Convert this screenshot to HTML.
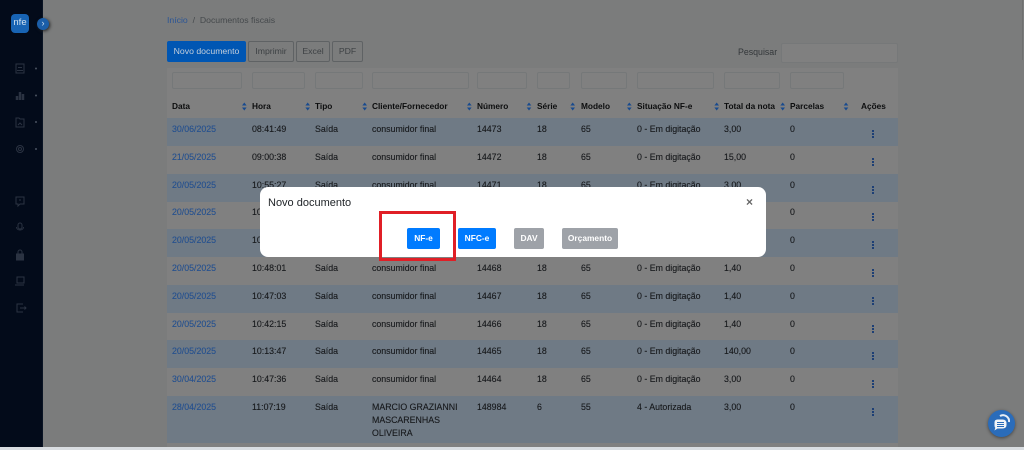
<!DOCTYPE html>
<html lang="pt-BR"><head><meta charset="utf-8"><title>Documentos fiscais</title>
<style>
*{box-sizing:border-box;margin:0;padding:0}
html,body{width:1024px;height:450px;overflow:hidden;background:#7b7c7c;font-family:"Liberation Sans",sans-serif;font-size:8.8px;color:#17191c}
.a,.r,.r span,.h span,.f,.b,.s,svg.i{position:absolute}
#side{position:absolute;left:0;top:0;width:43px;height:447px;background:#030b1a;border-right:1px solid #0a1424}
#bot{position:absolute;left:0;top:447px;width:1024px;height:3px;background:#d9dde1}
#card{position:absolute;left:167px;top:68px;width:731px;height:379px;background:#808080}
.f{top:72px;height:17px;border:1px solid #757879;border-radius:2px;background:#808080}
.h span{top:101px;font-weight:bold;font-size:8.3px;line-height:11px;color:#0c0d0e;white-space:nowrap}
.s{top:102px;width:5px;height:9px}
.r{left:167px;width:731px;height:28px}
.r.o{background:#6f7a85}
.r span{top:6px;line-height:11px;white-space:nowrap;-webkit-text-stroke:.12px currentColor}
.r .c1{left:5px;color:#24508f}
.c2{left:85px}.c3{left:148px}.c4{left:205px}.c5{left:310px}.c6{left:370px}.c7{left:414px}.c8{left:470px}.c9{left:557px}.c10{left:623px}
.r i{position:absolute;left:705px;top:12px;width:2px;height:8px;background:repeating-linear-gradient(#1d3f75 0 2px,transparent 2px 3px)}
.b{top:41px;height:21px;border:1px solid #5f6264;border-radius:2px;color:#3d4144;text-align:center;line-height:19px;font-size:8.7px}
.m{position:absolute;top:228px;height:21px;border-radius:2px;color:#fff;text-align:center;line-height:21px;font-size:8.4px;font-weight:bold;background:#007bff}
.g{background:#9ea2a8}
</style></head><body>
<div id="side"></div>
<div class="a" style="left:11px;top:14px;width:18px;height:19px;background:#1864b4;border-radius:4px;color:#cfe0f0;font-size:9.5px;line-height:18px;text-align:center">nfe</div>
<div class="a" style="left:37px;top:18px;width:12px;height:12px;border-radius:50%;background:#1b5ea8;box-shadow:1px 1px 3px #222;color:#cfe0f0;font-size:9px;line-height:11px;text-align:center">›</div>
<svg class="i" style="left:0;top:50px" width="43" height="280" fill="none" stroke="#2b3342" stroke-width="1">
<rect x="16" y="14" width="8" height="9"/><path d="M18 17.500h4M17 20.500h6"/>
<path d="M17 50v-4M20 50v-8M23 50v-6" stroke-width="2.500"/>
<path d="M16 68h3l1 1h4v8h-8zM18 75l2-2 2 2"/>
<circle cx="20" cy="99" r="3.500"/><circle cx="20" cy="99" r="1.500"/>
<path d="M16 147h8v7h-4l-2 2v-2h-2z"/><path d="M20 149v2"/>
<rect x="18" y="173" width="4" height="6" rx="2"/><path d="M16.500 177c0 4 7 4 7 0"/>
<rect x="16.500" y="204" width="7" height="6" fill="#2b3342"/><path d="M18 204v-2a2 2 0 0 1 4 0v2"/>
<path d="M17 227h7v6h-7zM15 235h9"/>
<path d="M23 254h-6v8h6M20 258h6M24.500 256.500l1.500 1.500-1.500 1.500"/>
</svg>
<svg class="i" style="left:34px;top:66px" width="4" height="90" fill="#4a5260"><circle cx="2" cy="2.500" r="1"/><circle cx="2" cy="29.500" r="1"/><circle cx="2" cy="56" r="1"/><circle cx="2" cy="83" r="1"/></svg>

<div class="a" style="left:167px;top:15px;font-size:8.7px;line-height:11px;color:#45494c;white-space:nowrap"><span style="color:#2b5596">Início</span> &nbsp;/&nbsp; Documentos fiscais</div>
<div class="b" style="left:167px;width:79px;background:#0056b3;border-color:#0056b3;color:#c4cfdb">Novo documento</div>
<div class="b" style="left:248px;width:46px">Imprimir</div>
<div class="b" style="left:296px;width:34px">Excel</div>
<div class="b" style="left:332px;width:31px">PDF</div>
<div class="a" style="left:738px;top:47px;line-height:11px;color:#33373a">Pesquisar</div>
<div class="a" style="left:781px;top:43px;width:117px;height:20px;background:#808080;border:1px solid #767879;border-radius:2px"></div>

<div id="card"></div>
<div class="f" style="left:172px;width:70px"></div><div class="f" style="left:252px;width:53px"></div><div class="f" style="left:315px;width:48px"></div><div class="f" style="left:372px;width:97px"></div><div class="f" style="left:477px;width:50px"></div><div class="f" style="left:537px;width:33px"></div><div class="f" style="left:581px;width:46px"></div><div class="f" style="left:637px;width:77px"></div><div class="f" style="left:724px;width:56px"></div><div class="f" style="left:790px;width:54px"></div>
<div class="h">
<span style="left:172px">Data</span><span style="left:252px">Hora</span><span style="left:315px">Tipo</span><span style="left:372px">Cliente/Fornecedor</span><span style="left:477px">Número</span><span style="left:537px">Série</span><span style="left:581px">Modelo</span><span style="left:637px">Situação NF-e</span><span style="left:724px">Total da nota</span><span style="left:790px">Parcelas</span><span style="left:861px">Ações</span>
</div>
<svg class="s" style="left:0;top:102px;width:1024px;height:9px" fill="#174a8e"><path d="M242 3.500l2.300-3 2.300 3zM242 5.500l2.300 3 2.300-3zM305.400 3.500l2.300-3 2.300 3zM305.400 5.500l2.300 3 2.300-3zM362.400 3.500l2.300-3 2.300 3zM362.400 5.500l2.300 3 2.300-3zM467 3.500l2.300-3 2.300 3zM467 5.500l2.300 3 2.300-3zM526.700 3.500l2.300-3 2.300 3zM526.700 5.500l2.300 3 2.300-3zM570.400 3.500l2.300-3 2.300 3zM570.400 5.500l2.300 3 2.300-3zM627 3.500l2.300-3 2.300 3zM627 5.500l2.300 3 2.300-3zM714.400 3.500l2.300-3 2.300 3zM714.400 5.500l2.300 3 2.300-3zM780.400 3.500l2.300-3 2.300 3zM780.400 5.500l2.300 3 2.300-3zM843.700 3.500l2.300-3 2.300 3zM843.700 5.500l2.300 3 2.300-3z"/></svg>

<div class="r o" style="top:118px"><span class="c1">30/06/2025</span><span class="c2">08:41:49</span><span class="c3">Saída</span><span class="c4">consumidor final</span><span class="c5">14473</span><span class="c6">18</span><span class="c7">65</span><span class="c8">0 - Em digitação</span><span class="c9">3,00</span><span class="c10">0</span><i></i></div>
<div class="r" style="top:146px"><span class="c1">21/05/2025</span><span class="c2">09:00:38</span><span class="c3">Saída</span><span class="c4">consumidor final</span><span class="c5">14472</span><span class="c6">18</span><span class="c7">65</span><span class="c8">0 - Em digitação</span><span class="c9">15,00</span><span class="c10">0</span><i></i></div>
<div class="r o" style="top:173.500px"><span class="c1">20/05/2025</span><span class="c2">10:55:27</span><span class="c3">Saída</span><span class="c4">consumidor final</span><span class="c5">14471</span><span class="c6">18</span><span class="c7">65</span><span class="c8">0 - Em digitação</span><span class="c9">3,00</span><span class="c10">0</span><i></i></div>
<div class="r" style="top:201px"><span class="c1">20/05/2025</span><span class="c2">10:53:12</span><span class="c3">Saída</span><span class="c4">consumidor final</span><span class="c5">14470</span><span class="c6">18</span><span class="c7">65</span><span class="c8">0 - Em digitação</span><span class="c9">1,40</span><span class="c10">0</span><i></i></div>
<div class="r o" style="top:229px"><span class="c1">20/05/2025</span><span class="c2">10:50:44</span><span class="c3">Saída</span><span class="c4">consumidor final</span><span class="c5">14469</span><span class="c6">18</span><span class="c7">65</span><span class="c8">0 - Em digitação</span><span class="c9">1,40</span><span class="c10">0</span><i></i></div>
<div class="r" style="top:257px"><span class="c1">20/05/2025</span><span class="c2">10:48:01</span><span class="c3">Saída</span><span class="c4">consumidor final</span><span class="c5">14468</span><span class="c6">18</span><span class="c7">65</span><span class="c8">0 - Em digitação</span><span class="c9">1,40</span><span class="c10">0</span><i></i></div>
<div class="r o" style="top:285px"><span class="c1">20/05/2025</span><span class="c2">10:47:03</span><span class="c3">Saída</span><span class="c4">consumidor final</span><span class="c5">14467</span><span class="c6">18</span><span class="c7">65</span><span class="c8">0 - Em digitação</span><span class="c9">1,40</span><span class="c10">0</span><i></i></div>
<div class="r" style="top:313px"><span class="c1">20/05/2025</span><span class="c2">10:42:15</span><span class="c3">Saída</span><span class="c4">consumidor final</span><span class="c5">14466</span><span class="c6">18</span><span class="c7">65</span><span class="c8">0 - Em digitação</span><span class="c9">1,40</span><span class="c10">0</span><i></i></div>
<div class="r o" style="top:340px"><span class="c1">20/05/2025</span><span class="c2">10:13:47</span><span class="c3">Saída</span><span class="c4">consumidor final</span><span class="c5">14465</span><span class="c6">18</span><span class="c7">65</span><span class="c8">0 - Em digitação</span><span class="c9">140,00</span><span class="c10">0</span><i></i></div>
<div class="r" style="top:368px"><span class="c1">30/04/2025</span><span class="c2">10:47:36</span><span class="c3">Saída</span><span class="c4">consumidor final</span><span class="c5">14464</span><span class="c6">18</span><span class="c7">65</span><span class="c8">0 - Em digitação</span><span class="c9">3,00</span><span class="c10">0</span><i></i></div>
<div class="r o" style="top:396px;height:47px"><span class="c1">28/04/2025</span><span class="c2">11:07:19</span><span class="c3">Saída</span><span class="c4" style="line-height:13px;top:5px">MARCIO GRAZIANNI<br>MASCARENHAS<br>OLIVEIRA</span><span class="c5">148984</span><span class="c6">6</span><span class="c7">55</span><span class="c8">4 - Autorizada</span><span class="c9">3,00</span><span class="c10">0</span><i></i></div>

<div class="a" style="left:260px;top:187px;width:506px;height:70px;background:#fff;border-radius:8px"></div>
<div class="a" style="left:268px;top:196px;font-size:11px;line-height:14px;color:#212529">Novo documento</div>
<div class="a" style="left:746px;top:195px;font-size:12px;line-height:14px;font-weight:bold;color:#666">×</div>
<div class="m" style="left:407px;width:33px">NF-e</div>
<div class="m" style="left:458px;width:38px">NFC-e</div>
<div class="m g" style="left:514px;width:30px">DAV</div>
<div class="m g" style="left:562px;width:56px">Orçamento</div>
<div class="a" style="left:379px;top:210.500px;width:77px;height:50.500px;border:3px solid #e01f26"></div>

<div class="a" style="left:988px;top:410px;width:27px;height:27px;border-radius:50%;background:#2a6cba;box-shadow:0 1px 3px #444"></div>
<svg class="i" style="left:988px;top:410px" width="27" height="27"><path d="M12 6a6 6 0 0 1 9 6" fill="none" stroke="#e8eef5" stroke-width="2"/><path d="M6.500 12.500q0-3 3-3h5q4 0 4 4v1.500q0 3.500-4 3.500h-5l-3 2 .8-2.800q-.8-1-.8-2z" fill="#f2f5f8"/><path d="M9 12.500h7M9 14.500h7M9 16.500h7" stroke="#2a6cba"/></svg>
<div class="a" style="left:1022px;top:0;width:1px;height:60px;background:#6f7070"></div>
<div id="bot"></div>
</body></html>
